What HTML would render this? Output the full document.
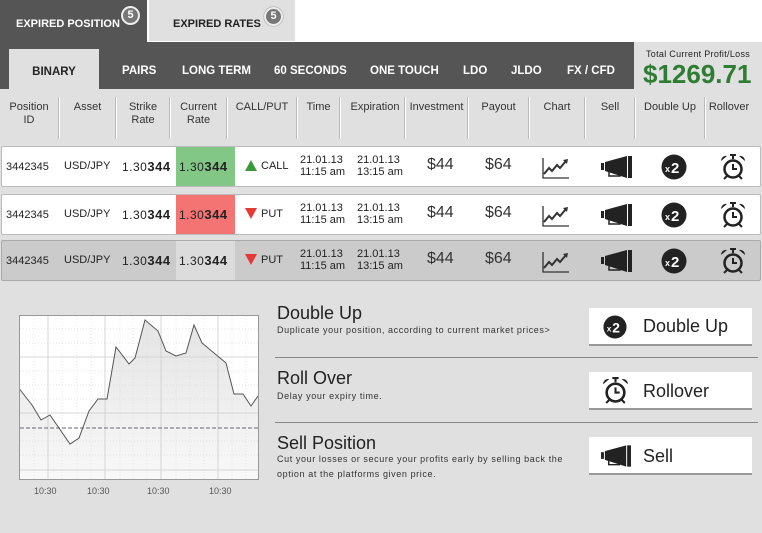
<!DOCTYPE html>
<html><head><meta charset="utf-8"><style>
*{margin:0;padding:0;box-sizing:border-box}
body{width:762px;height:533px;background:#e0e0e0;font-family:"Liberation Sans",Arial,sans-serif;position:relative;overflow:hidden;color:#222}
.a{position:absolute}
.top{left:0;top:0;width:762px;height:42px;background:#fff}
.t1{left:0;top:0;width:147px;height:42px;background:#555;color:#fff;font-size:11px;font-weight:bold}
.t2{left:149px;top:0;width:146px;height:41px;background:#e0e0e0;color:#222;font-size:11px;font-weight:bold}
.badge{position:absolute;width:19px;height:19px;border-radius:50%;background:#777;border:2px solid #eee;color:#fff;font-size:11px;text-align:center;line-height:15px;font-weight:bold;box-shadow:0 0 1px #333}
.bar{left:0;top:42px;width:634px;height:47px;background:#555}
.nav{color:#fff;font-size:11.5px;font-weight:bold;top:65px}
.bin{left:9px;top:49px;width:90px;height:40px;background:#e0e0e0;color:#222;font-size:11.5px;font-weight:bold;text-align:center;line-height:46px}
.hd{top:101px;font-size:11px;color:#333;text-align:center;line-height:13px}
.sep{top:97px;width:2px;height:42px;background:#fff;border-left:1px solid #bbb}
.row{left:1px;width:760px;height:41px;background:#fff;border:1px solid #bbb;border-radius:2px}
.c{font-size:11px;color:#222}
.big{font-size:16px;color:#333}
.cr{position:absolute;left:174px;width:59px;height:39px;top:0}
.rate{font-size:12px;letter-spacing:0.5px}
.rate b{font-size:13px}
.ttl{font-size:18px;color:#222;left:277px}
.sub{font-size:9px;color:#333;left:277px;letter-spacing:0.6px;line-height:15px}
.hr{left:275px;width:483px;height:1px;background:#888}
.btn{left:589px;width:163px;height:38px;background:#fff;border-bottom:2px solid #999;font-size:18px;color:#222}
.lbl{top:486px;font-size:9px;color:#555}
</style></head><body>
<svg width="0" height="0" style="position:absolute">
<defs>
<symbol id="chart" viewBox="0 0 28 22"><path d="M1 1V21H27" fill="none" stroke="#333" stroke-width="1.3"/><path d="M2 17L7 11L10 14L15 8L18 11L24 4" fill="none" stroke="#333" stroke-width="2"/><path d="M21 3L26 2L25 7Z" fill="#333"/></symbol>
<symbol id="meg" viewBox="0 0 31 22"><rect x="0" y="7" width="3" height="7" fill="#222"/><path d="M4 6L26 0V22L4 15Z" fill="#222"/><rect x="27" y="0" width="4" height="22" fill="#222"/><path d="M8 15V20H19V17" fill="none" stroke="#222" stroke-width="1.5"/></symbol>
<symbol id="x2" viewBox="0 0 26 26"><circle cx="13" cy="13" r="12.5" fill="#222"/><text x="4" y="18" font-family="Liberation Sans" font-size="9" font-weight="bold" fill="#fff">x</text><text x="10" y="19" font-family="Liberation Sans" font-size="15" font-weight="bold" fill="#fff">2</text></symbol>
<symbol id="alarm" viewBox="0 0 26 26"><circle cx="13" cy="15" r="8.5" fill="none" stroke="#222" stroke-width="2.5"/><path d="M13 10V15H17" fill="none" stroke="#222" stroke-width="2"/><path d="M1 7A5 5 0 0 1 7 2Z M25 7A5 5 0 0 0 19 2Z" fill="#222"/><path d="M13 1V5M10 1H16M7 22L4 25M19 22L22 25" stroke="#222" stroke-width="2"/></symbol>
</defs></svg>

<div class="a top"></div>
<div class="a t1"><span class="a" style="left:16px;top:18px">EXPIRED POSITION</span><span class="badge" style="left:121px;top:6px">5</span></div>
<div class="a t2"><span class="a" style="left:24px;top:18px">EXPIRED RATES</span><span class="badge" style="left:115px;top:7px">5</span></div>
<div class="a bar"></div>
<div class="a bin">BINARY</div>
<span class="a nav" style="left:122px">PAIRS</span>
<span class="a nav" style="left:182px">LONG TERM</span>
<span class="a nav" style="left:274px">60 SECONDS</span>
<span class="a nav" style="left:370px">ONE TOUCH</span>
<span class="a nav" style="left:463px">LDO</span>
<span class="a nav" style="left:511px">JLDO</span>
<span class="a nav" style="left:567px">FX / CFD</span>
<span class="a" style="left:646px;top:49px;font-size:9px;color:#222;letter-spacing:0.3px">Total Current Profit/Loss</span>
<span class="a" style="left:643px;top:59px;font-size:26px;font-weight:bold;color:#2e7d32">$1269.71</span>

<span class="a hd" style="left:0;width:58px">Position<br>ID</span>
<span class="a hd" style="left:60px;width:55px">Asset</span>
<span class="a hd" style="left:117px;width:52px">Strike<br>Rate</span>
<span class="a hd" style="left:171px;width:55px">Current<br>Rate</span>
<span class="a hd" style="left:228px;width:68px">CALL/PUT</span>
<span class="a hd" style="left:298px;width:41px">Time</span>
<span class="a hd" style="left:341px;width:68px">Expiration</span>
<span class="a hd" style="left:406px;width:61px">Investment</span>
<span class="a hd" style="left:469px;width:59px">Payout</span>
<span class="a hd" style="left:530px;width:54px">Chart</span>
<span class="a hd" style="left:586px;width:48px">Sell</span>
<span class="a hd" style="left:636px;width:68px">Double Up</span>
<span class="a hd" style="left:706px;width:46px">Rollover</span>
<div class="a sep" style="left:58px"></div><div class="a sep" style="left:115px"></div><div class="a sep" style="left:169px"></div><div class="a sep" style="left:226px"></div><div class="a sep" style="left:296px"></div><div class="a sep" style="left:339px"></div><div class="a sep" style="left:404px"></div><div class="a sep" style="left:467px"></div><div class="a sep" style="left:528px"></div><div class="a sep" style="left:584px"></div><div class="a sep" style="left:634px"></div><div class="a sep" style="left:704px"></div>

<div class="a row" style="top:146px">
 <div class="cr" style="background:#82c785"></div>
 <span class="a c" style="left:4px;top:14px">3442345</span>
 <span class="a c" style="left:62px;top:13px">USD/JPY</span>
 <span class="a rate" style="left:120px;top:12px">1.30<b>344</b></span>
 <span class="a rate" style="left:177px;top:12px">1.30<b>344</b></span>
 <svg class="a" style="left:243px;top:13px" width="12" height="11"><path d="M6 0L12 11H0Z" fill="#3a9a3a"/></svg>
 <span class="a c" style="left:259px;top:13px">CALL</span>
 <span class="a c" style="left:298px;top:7px;line-height:12px">21.01.13<br>11:15 am</span>
 <span class="a c" style="left:355px;top:7px;line-height:12px">21.01.13<br>13:15 am</span>
 <span class="a big" style="left:425px;top:9px">$44</span>
 <span class="a big" style="left:483px;top:9px">$64</span>
 <svg class="a" style="left:540px;top:10px" width="28" height="22"><use href="#chart"/></svg>
 <svg class="a" style="left:599px;top:9px" width="31" height="22"><use href="#meg"/></svg>
 <svg class="a" style="left:659px;top:7px" width="26" height="26"><use href="#x2"/></svg>
 <svg class="a" style="left:718px;top:7px" width="26" height="26"><use href="#alarm"/></svg>
</div>
<div class="a row" style="top:194px">
 <div class="cr" style="background:#f47373"></div>
 <span class="a c" style="left:4px;top:14px">3442345</span>
 <span class="a c" style="left:62px;top:13px">USD/JPY</span>
 <span class="a rate" style="left:120px;top:12px">1.30<b>344</b></span>
 <span class="a rate" style="left:177px;top:12px">1.30<b>344</b></span>
 <svg class="a" style="left:243px;top:13px" width="12" height="11"><path d="M0 0H12L6 11Z" fill="#e53935"/></svg>
 <span class="a c" style="left:259px;top:13px">PUT</span>
 <span class="a c" style="left:298px;top:7px;line-height:12px">21.01.13<br>11:15 am</span>
 <span class="a c" style="left:355px;top:7px;line-height:12px">21.01.13<br>13:15 am</span>
 <span class="a big" style="left:425px;top:9px">$44</span>
 <span class="a big" style="left:483px;top:9px">$64</span>
 <svg class="a" style="left:540px;top:10px" width="28" height="22"><use href="#chart"/></svg>
 <svg class="a" style="left:599px;top:9px" width="31" height="22"><use href="#meg"/></svg>
 <svg class="a" style="left:659px;top:7px" width="26" height="26"><use href="#x2"/></svg>
 <svg class="a" style="left:718px;top:7px" width="26" height="26"><use href="#alarm"/></svg>
</div>
<div class="a row" style="top:240px;background:#cbcbcb;border-color:#aaa">
 <div class="cr" style="background:#dcdcdc"></div>
 <span class="a c" style="left:4px;top:14px">3442345</span>
 <span class="a c" style="left:62px;top:13px">USD/JPY</span>
 <span class="a rate" style="left:120px;top:12px">1.30<b>344</b></span>
 <span class="a rate" style="left:177px;top:12px">1.30<b>344</b></span>
 <svg class="a" style="left:243px;top:13px" width="12" height="11"><path d="M0 0H12L6 11Z" fill="#e53935"/></svg>
 <span class="a c" style="left:259px;top:13px">PUT</span>
 <span class="a c" style="left:298px;top:7px;line-height:12px">21.01.13<br>11:15 am</span>
 <span class="a c" style="left:355px;top:7px;line-height:12px">21.01.13<br>13:15 am</span>
 <span class="a big" style="left:425px;top:9px">$44</span>
 <span class="a big" style="left:483px;top:9px">$64</span>
 <svg class="a" style="left:540px;top:10px" width="28" height="22"><use href="#chart"/></svg>
 <svg class="a" style="left:599px;top:9px" width="31" height="22"><use href="#meg"/></svg>
 <svg class="a" style="left:659px;top:7px" width="26" height="26"><use href="#x2"/></svg>
 <svg class="a" style="left:718px;top:7px" width="26" height="26"><use href="#alarm"/></svg>
</div>

<svg class="a" style="left:0;top:290px" width="270" height="243" viewBox="0 290 270 243">
<defs><linearGradient id="g" x1="0" y1="0" x2="0" y2="1"><stop offset="0" stop-color="#e4e4e4"/><stop offset="1" stop-color="#f8f8f8"/></linearGradient></defs>
<rect x="19.5" y="315.5" width="239" height="164" fill="#fff" stroke="#999"/>
<path d="M19.5 389L32 405L41 420L50 415L70 444L79 438L89 411L98 399L107 399L116 347L129 364L135 358L145 320L158 331L166 351L176 356L186 353L194 325L202 343L226 363L234 394L243 394L251 406L258 396V479H19.5Z" fill="url(#g)"/>
<g stroke="#ddd" stroke-dasharray="1,2" stroke-width="0.7"><path d="M34 316V479M62 316V479M77 316V479M91 316V479M120 316V479M133 316V479M147 316V479M176 316V479M190 316V479M204 316V479M232 316V479M246 316V479M20 329H258M20 343H258M20 371H258M20 385H258M20 399H258M20 441H258M20 455H258"/></g>
<g stroke="#ccc" stroke-width="0.8"><path d="M48 316V479M105 316V479M161 316V479M218 316V479M20 357H258M20 413H258M20 470H258"/></g>
<path d="M20 428H258" stroke="#667" stroke-dasharray="4,2"/>
<path d="M19.5 389L32 405L41 420L50 415L70 444L79 438L89 411L98 399L107 399L116 347L129 364L135 358L145 320L158 331L166 351L176 356L186 353L194 325L202 343L226 363L234 394L243 394L251 406L258 396" fill="none" stroke="#555" stroke-width="1"/>
<rect x="19.5" y="315.5" width="239" height="164" fill="none" stroke="#999"/>
</svg>
<span class="a lbl" style="left:34px">10:30</span>
<span class="a lbl" style="left:87px">10:30</span>
<span class="a lbl" style="left:147px">10:30</span>
<span class="a lbl" style="left:209px">10:30</span>

<span class="a ttl" style="top:303px">Double Up</span>
<span class="a sub" style="top:323px">Duplicate your position, according to current market prices&gt;</span>
<div class="a hr" style="top:357px"></div>
<span class="a ttl" style="top:368px">Roll Over</span>
<span class="a sub" style="top:389px">Delay your expiry time.</span>
<div class="a hr" style="top:422px"></div>
<span class="a ttl" style="top:433px">Sell Position</span>
<span class="a sub" style="top:452px">Cut your losses or secure your profits early by selling back the<br>option at the platforms given price.</span>

<div class="a btn" style="top:308px"><svg class="a" style="left:14px;top:7px" width="24" height="24"><use href="#x2"/></svg><span class="a" style="left:54px;top:8px">Double Up</span></div>
<div class="a btn" style="top:372px"><svg class="a" style="left:13px;top:5px" width="27" height="27"><use href="#alarm"/></svg><span class="a" style="left:54px;top:9px">Rollover</span></div>
<div class="a btn" style="top:437px"><svg class="a" style="left:12px;top:8px" width="30" height="22"><use href="#meg"/></svg><span class="a" style="left:54px;top:9px">Sell</span></div>
</body></html>
